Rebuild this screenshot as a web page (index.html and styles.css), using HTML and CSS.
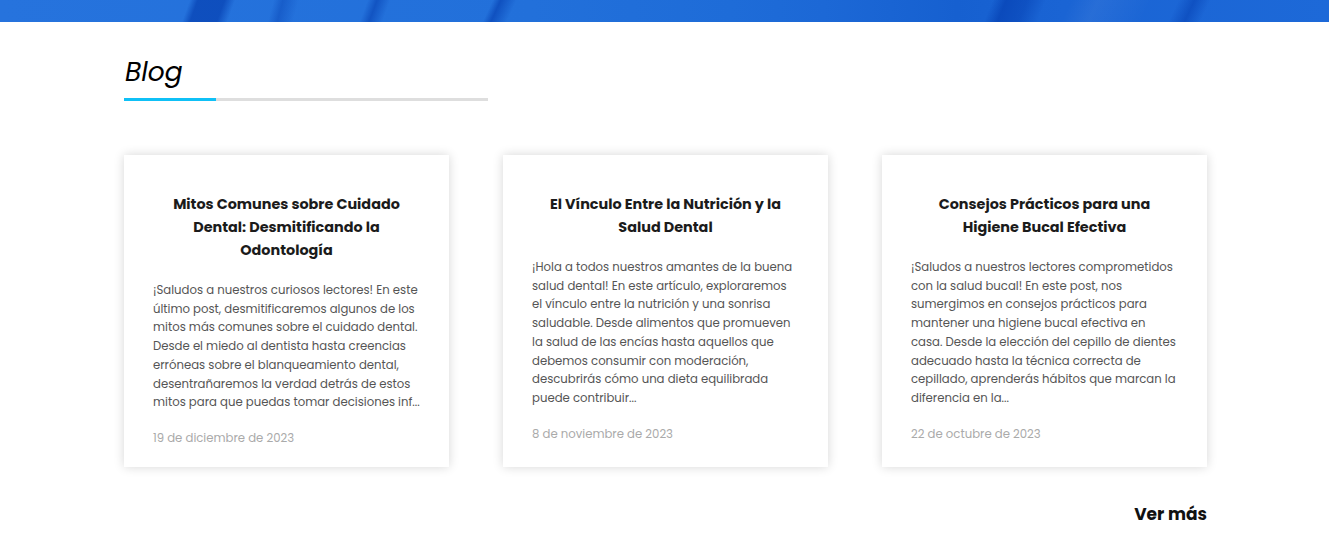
FILE: index.html
```html
<!DOCTYPE html>
<html lang="es">
<head>
<meta charset="utf-8">
<title>Blog</title>
<link rel="stylesheet" href="styles.css">
</head>
<body>
<div class="banner"></div>
<section class="blog">
  <div class="blog-head">
    <h2 class="blog-title">Blog</h2>
    <div class="blog-rule"><span class="blog-rule-accent"></span></div>
  </div>
  <div class="cards">
    <article class="card">
      <h3 class="card-title">Mitos Comunes sobre Cuidado Dental: Desmitificando la Odontología</h3>
      <p class="card-text">¡Saludos a nuestros curiosos lectores! En este último post, desmitificaremos algunos de los mitos más comunes sobre el cuidado dental. Desde el miedo al dentista hasta creencias erróneas sobre el blanqueamiento dental, desentrañaremos la verdad detrás de estos mitos para que puedas tomar decisiones inf...</p>
      <p class="card-date">19 de diciembre de 2023</p>
    </article>
    <article class="card">
      <h3 class="card-title">El Vínculo Entre la Nutrición y la Salud Dental</h3>
      <p class="card-text">¡Hola a todos nuestros amantes de la buena salud dental! En este artículo, exploraremos el vínculo entre la nutrición y una sonrisa saludable. Desde alimentos que promueven la salud de las encías hasta aquellos que debemos consumir con moderación, descubrirás cómo una dieta equilibrada puede contribuir...</p>
      <p class="card-date">8 de noviembre de 2023</p>
    </article>
    <article class="card">
      <h3 class="card-title">Consejos Prácticos para una Higiene Bucal Efectiva</h3>
      <p class="card-text">¡Saludos a nuestros lectores comprometidos con la salud bucal! En este post, nos sumergimos en consejos prácticos para mantener una higiene bucal efectiva en casa. Desde la elección del cepillo de dientes adecuado hasta la técnica correcta de cepillado, aprenderás hábitos que marcan la diferencia en la...</p>
      <p class="card-date">22 de octubre de 2023</p>
    </article>
  </div>
  <div class="more-row">
    <a class="more-link" href="#">Ver más</a>
  </div>
</section>
</body>
</html>
```

FILE: styles.css
```css
* { box-sizing: border-box; }

body {
  margin: 0;
  background: #fff;
  font-family: "Poppins", "Open Sans", "Liberation Sans", sans-serif;
  color: #222;
}

.banner {
  height: 22px;
  background:
    linear-gradient(110deg, transparent 0 14.2%, rgba(0,55,170,0.6) 14.8%, rgba(0,55,170,0.6) 16.8%, transparent 17.6%),
    linear-gradient(105deg, transparent 0 20.5%, rgba(0,55,170,0.35) 21.2%, transparent 22.4%),
    linear-gradient(110deg, transparent 0 27.5%, rgba(0,55,170,0.5) 28.2%, transparent 29.2%),
    linear-gradient(115deg, transparent 0 36.8%, rgba(0,55,170,0.55) 37.4%, transparent 38.6%),
    linear-gradient(112deg, transparent 0 74.2%, rgba(0,55,170,0.55) 75.2%, rgba(0,55,170,0.4) 76.8%, transparent 78.2%),
    linear-gradient(115deg, transparent 0 88%, rgba(0,55,170,0.45) 89.2%, transparent 90.4%),
    linear-gradient(115deg, transparent 0 80%, rgba(255,255,255,0.06) 82%, transparent 86%),
    linear-gradient(90deg, #2673dd 0%, #2270da 40%, #1e6cd8 55%, #1c68d6 62%, #1660d0 72%, #1a64d4 80%, #1d69d8 100%);
}

.blog {
  width: 1083px;
  margin-left: 124px;
  padding-top: 32px;
}

.blog-head {
  width: 364px;
}

.blog-title {
  margin: 0;
  font-size: 26.5px;
  line-height: 36px;
  font-style: italic;
  font-weight: 400;
  color: #000;
  padding-left: 1px;
}

.blog-rule {
  margin-top: 8px;
  height: 3px;
  background: #dedede;
  display: flex;
}

.blog-rule-accent {
  width: 92px;
  background: #0fc0f6;
}

.cards {
  margin-top: 54px;
  display: grid;
  grid-template-columns: repeat(3, 325px);
  justify-content: space-between;
}

.card {
  background: #fff;
  box-shadow: 0 0 10px rgba(0,0,0,0.16);
  padding: 38px 29px 20px 29px;
  display: flex;
  flex-direction: column;
}

.card-title {
  margin: 0 0 19px;
  text-align: center;
  font-size: 14.4px;
  line-height: 23px;
  font-weight: 700;
  color: #1b1b1b;
}

.card-text {
  margin: 0;
  font-size: 11.7px;
  line-height: 18.7px;
  color: #555;
}

.card-date {
  margin: 17px 0 0;
  font-size: 11.7px;
  line-height: 18px;
  color: #aaa;
}

.more-row {
  display: flex;
  justify-content: flex-end;
  margin-top: 34px;
}

.more-link {
  font-size: 17px;
  line-height: 26px;
  font-weight: 700;
  color: #111;
  text-decoration: none;
}
```
